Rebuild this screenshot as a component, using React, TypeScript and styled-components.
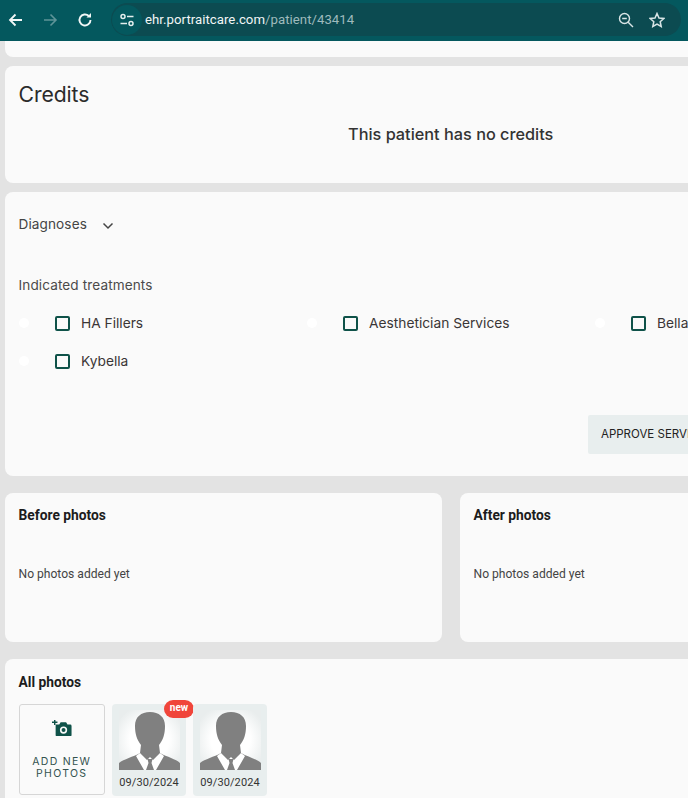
import React from "react";
import styled, { createGlobalStyle } from "styled-components";

const Global = createGlobalStyle`
  html, body { margin: 0; padding: 0; height: 100%; overflow: hidden; background: #e3e3e3; }
  #root { width: 688px; height: 798px; overflow: hidden; }
`;

const Page = styled.div`
  width: 688px; height: 798px; overflow: hidden; background: #e3e3e3;
  font-family: Inter, "Liberation Sans", sans-serif; color: #333;
`;
const Toolbar = styled.header`
  height: 41px; box-sizing: border-box; background: #04585e; display: flex; align-items: center;
  padding: 0 0 2px 0;
`;
const NavButton = styled.span<{ $dim?: boolean; $w: number }>`
  width: ${p => p.$w}px; display: flex; justify-content: center; align-items: center;
  color: ${p => (p.$dim ? "#5f9498" : "#f2f7f7")};
`;
const Omnibox = styled.div`
  margin-left: 10px; width: 570px; height: 33px; border-radius: 17px; background: #0c4b51;
  display: flex; align-items: center; flex: none;
`;
const SiteChip = styled.span`
  width: 30px; height: 30px; margin-left: 1px; border-radius: 50%; background: #04585e; flex: none;
  display: flex; align-items: center; justify-content: center; color: #e4eeee;
`;
const Url = styled.span`
  margin-left: 3px; font: 13.2px Roboto, sans-serif; color: #f2f6f6; letter-spacing: 0.04px; flex: 1; white-space: nowrap;
`;
const UrlPath = styled.span`color: #9fbabc;`;
const OmniIcon = styled.span<{ $right: number }>`
  display: flex; margin-right: ${p => p.$right}px; color: #d9e5e6;
`;
const Column = styled.main`
  display: flex; flex-direction: column; width: 900px; padding-left: 5px;
`;
const Card = styled.section<{ $h: number; $mt: number; $flatTop?: boolean }>`
  background: #fafafa; height: ${p => p.$h}px; margin-top: ${p => p.$mt}px; box-sizing: border-box;
  border-radius: ${p => (p.$flatTop ? "0 0 0 8px" : "8px 0 0 8px")}; padding-left: 13.5px;
`;
const CreditsTitle = styled.h2`
  margin: 0; padding-top: 14px; font: 400 21.2px/28px Inter, sans-serif; color: #2b2b2b; letter-spacing: -0.1px;
`;
const EmptyCredits = styled.p`
  margin: 16px 0 0; width: 663px; box-sizing: border-box; padding-left: 329.5px;
  font: 500 16.3px/20px Inter, sans-serif; color: #333;
`;
const DiagnosesRow = styled.div`
  display: flex; align-items: center; gap: 15px; padding-top: 23px; height: 18px;
  font: 400 13.6px/18px Inter, sans-serif; color: #444; letter-spacing: 0.1px;
`;
const Chevron = styled.svg`
  margin-top: 3px;
`;
const SectionLabel = styled.div`
  margin-top: 43px; font: 400 13.6px/18px Inter, sans-serif; color: #4a4a4a; letter-spacing: 0.1px;
`;
const TreatmentGrid = styled.div`
  margin-top: 20px; display: grid; grid-template-columns: repeat(3, 288px); row-gap: 19px;
`;
const Treatment = styled.label`
  display: flex; align-items: center; height: 19px; position: relative; padding-left: 36px;
  font: 400 13.75px/19px Inter, sans-serif; color: #3a3636; white-space: nowrap;
`;
const Dot = styled.span`
  position: absolute; left: 0; top: 4px; width: 10px; height: 10px; border-radius: 50%; background: #fff;
`;
const Box = styled.span`
  width: 11.5px; height: 11.5px; border: 2px solid #0f5249; border-radius: 2px; margin-right: 11px; flex: none;
`;
const ApproveRow = styled.div`
  margin-top: 44px; padding-left: 569.5px;
`;
const ApproveButton = styled.button`
  width: 200px; height: 39px; border: 0; border-radius: 2px; background: #e8eeee; text-align: left; padding: 0 13px;
  font: 400 11.5px/39px Inter, sans-serif; color: #222; white-space: nowrap;
`;
const PhotoRow = styled.div`
  display: flex; gap: 18px; margin-top: 17px;
`;
const PhotoCard = styled.section<{ $w: number }>`
  width: ${p => p.$w}px; height: 149px; box-sizing: border-box; background: #fafafa; border-radius: 8px;
  padding: 13px 14px 0 13.5px;
`;
const PhotoTitle = styled.h3`
  margin: 0; font: 700 13.8px/18px Roboto, sans-serif; color: #1c1c1c;
`;
const PhotoEmpty = styled.p`
  margin: 42px 0 0; font: 400 12.1px/16px Roboto, sans-serif; color: #444;
`;
const AllCard = styled.section`
  margin-top: 17px; height: 160px; background: #fafafa; border-radius: 8px 0 0 0; padding: 14px 14px 0 13.5px;
`;
const Thumbs = styled.div`
  display: flex; gap: 7px; margin-top: 13px;
`;
const AddTile = styled.div`
  width: 86.5px; height: 91px; box-sizing: border-box; border: 1px solid #d6d6d6; border-radius: 3px; background: #fafafa;
  display: flex; flex-direction: column; align-items: center; padding-top: 15px; color: #0f5249;
`;
const AddLabel = styled.span`
  margin-top: 19.5px; text-align: center; font: 400 10.5px/12px Inter, sans-serif; letter-spacing: 1.3px; color: #33524f;
`;
const Thumb = styled.div`
  position: relative; width: 74px; height: 92px; background: #e8eeee; border-radius: 4px;
  display: flex; flex-direction: column; align-items: center; padding-top: 6px; box-sizing: border-box;
`;
const Portrait = styled.svg`
  width: 61px; height: 60px; display: block; background: radial-gradient(ellipse at center, #fff 45%, #e9eded 85%);
`;
const DateText = styled.span`
  margin-top: 6px; font: 400 11px/14px Roboto, sans-serif; color: #333; letter-spacing: 0.1px;
`;
const NewBadge = styled.span`
  position: absolute; top: -4px; right: -8px; width: 30px; height: 18px; border-radius: 9px; background: #f0453a;
  color: #fff; text-align: center; font: 700 10px/16px Roboto, sans-serif;
`;

const PersonArt = () => (
  <Portrait viewBox="0 0 61 60">
    <path fill="#808080" d="M0 60V53C5 49 14 47 21 43L22 35C18 30 16 24 16 16 16 7 22 2 31 2S46 7 46 16C46 24 44 30 40 35L41 43C48 47 57 49 61 53V60z" />
    <path fill="#fff" d="M21 43L28 50 31 47 34 50 41 43 45 46 37 60H25L17 46z" />
    <path fill="#808080" d="M28.500 49h5l-1 4 2.500 7h-8l2.500-7z" />
  </Portrait>
);

const Photo = ({ isNew }: { isNew?: boolean }) => (
  <Thumb>
    <PersonArt />
    <DateText>09/30/2024</DateText>
    {isNew && <NewBadge>new</NewBadge>}
  </Thumb>
);

export default function App() {
  return (
    <Page>
      <Global />
      <Toolbar>
        <NavButton $w={31}>
          <svg width="16" height="16" viewBox="0 0 16 16" fill="none" stroke="currentColor" strokeWidth="1.8"><path d="M14 8H2.500M7.500 2.500 2 8l5.500 5.500" /></svg>
        </NavButton>
        <NavButton $w={38} $dim>
          <svg width="16" height="16" viewBox="0 0 16 16" fill="none" stroke="currentColor" strokeWidth="1.6"><path d="M2 8h11.500M8.500 2.500 14 8l-5.500 5.500" /></svg>
        </NavButton>
        <NavButton $w={32}>
          <svg width="16" height="16" viewBox="0 0 16 16" fill="none" stroke="currentColor" strokeWidth="1.9"><path d="M13.500 8a5.500 5.500 0 1 1-1.700-4" /><path d="M14 1v4.500H9.500" fill="currentColor" stroke="none" /></svg>
        </NavButton>
        <Omnibox>
          <SiteChip>
            <svg width="16" height="14" viewBox="0 0 16 14" fill="none" stroke="currentColor" strokeWidth="1.500"><circle cx="4" cy="3.500" r="2" /><path d="M8 3.500h6.500M1.500 10.500H8" /><circle cx="12" cy="10.500" r="2" /></svg>
          </SiteChip>
          <Url>ehr.portraitcare.com<UrlPath>/patient/43414</UrlPath></Url>
          <OmniIcon $right={15}>
            <svg width="16" height="16" viewBox="0 0 16 16" fill="none" stroke="currentColor" strokeWidth="1.400"><circle cx="6.500" cy="6.500" r="5" /><path d="M10.200 10.200 15 15M4.200 6.500h4.600" /></svg>
          </OmniIcon>
          <OmniIcon $right={16}>
            <svg width="16" height="16" viewBox="0 0 16 16" fill="none" stroke="currentColor" strokeWidth="1.500"><path d="M8 1.500l2 4.500 4.800.5-3.600 3.200 1 4.800L8 12.100l-4.200 2.400 1-4.800L1.200 6.500 6 6z" /></svg>
          </OmniIcon>
        </Omnibox>
      </Toolbar>
      <Column>
        <Card $h={16} $mt={0} $flatTop />
        <Card $h={117} $mt={9}>
          <CreditsTitle>Credits</CreditsTitle>
          <EmptyCredits>This patient has no credits</EmptyCredits>
        </Card>
        <Card $h={284} $mt={9}>
          <DiagnosesRow>
            Diagnoses
            <Chevron width="12" height="8" viewBox="0 0 12 8" fill="none" stroke="#444" strokeWidth="1.500"><path d="M1.500 1.500 6 6l4.500-4.500" /></Chevron>
          </DiagnosesRow>
          <SectionLabel>Indicated treatments</SectionLabel>
          <TreatmentGrid>
            {["HA Fillers", "Aesthetician Services", "Bellafill", "Kybella"].map(t => (
              <Treatment key={t}><Dot /><Box />{t}</Treatment>
            ))}
          </TreatmentGrid>
          <ApproveRow><ApproveButton>APPROVE SERVICES</ApproveButton></ApproveRow>
        </Card>
        <PhotoRow>
          <PhotoCard $w={437}>
            <PhotoTitle>Before photos</PhotoTitle>
            <PhotoEmpty>No photos added yet</PhotoEmpty>
          </PhotoCard>
          <PhotoCard $w={437}>
            <PhotoTitle>After photos</PhotoTitle>
            <PhotoEmpty>No photos added yet</PhotoEmpty>
          </PhotoCard>
        </PhotoRow>
        <AllCard>
          <PhotoTitle>All photos</PhotoTitle>
          <Thumbs>
            <AddTile>
              <svg width="20" height="16.400" viewBox="0 0 22 18"><path fill="currentColor" d="M4 5h4l1.500-2.500h6L17 5h3a1.500 1.500 0 0 1 1.500 1.500v10A1.500 1.500 0 0 1 20 18H5.500A1.500 1.500 0 0 1 4 16.500z" /><circle cx="12.700" cy="11" r="4" fill="#fafafa" /><circle cx="12.700" cy="11" r="2.200" fill="currentColor" /><path stroke="currentColor" strokeWidth="1.600" d="M0 2.500h6M3 0v5.500" /></svg>
              <AddLabel>ADD NEW<br />PHOTOS</AddLabel>
            </AddTile>
            <Photo isNew />
            <Photo />
          </Thumbs>
        </AllCard>
      </Column>
    </Page>
  );
}
